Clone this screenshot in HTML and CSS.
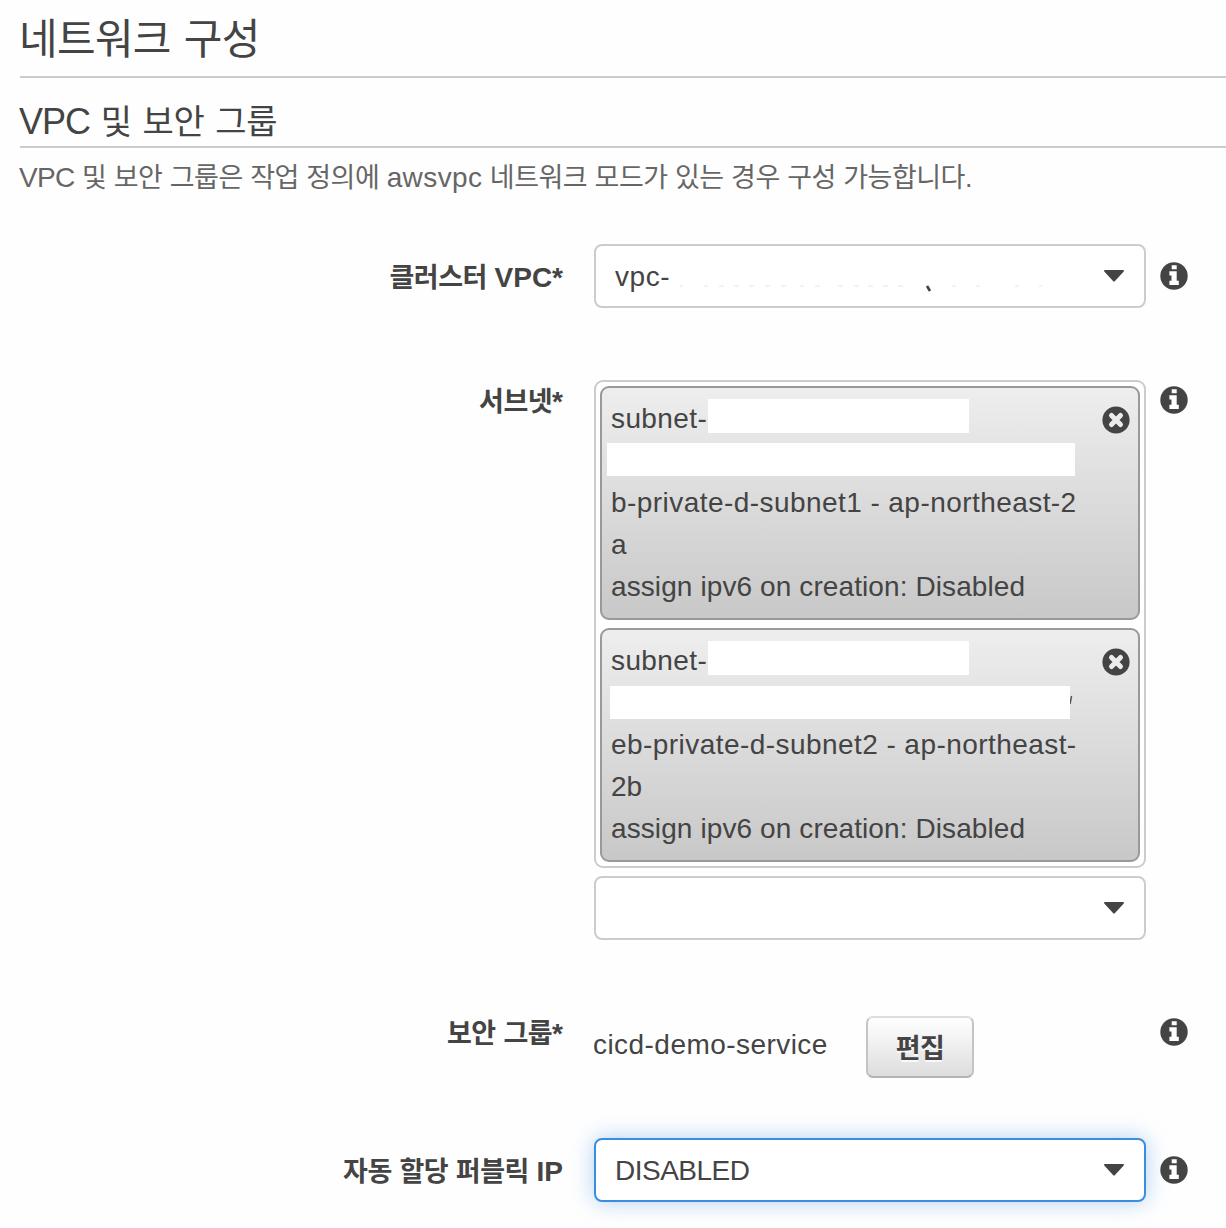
FILE: index.html
```html
<!DOCTYPE html>
<html lang="ko">
<head>
<meta charset="utf-8">
<title>네트워크 구성</title>
<link rel="stylesheet" href="styles.css">
</head>
<body>
<svg class="defs" width="0" height="0">
  <symbol id="info" viewBox="0 0 28 28"><circle cx="14" cy="14" r="13.7" fill="#444"/><path d="M11.7 3.200h5v4h-5zM9.400 9.300h7.300v9.500h2.100v4.300H9.400v-4.300h2.100v-5.400H9.400z" fill="#fff"/></symbol>
  <symbol id="remove" viewBox="0 0 28 28"><circle cx="14" cy="14" r="13.6" fill="#444"/><path d="M9.500 9.500l9 9m0-9l-9 9" stroke="#ececec" stroke-width="5" stroke-linecap="round"/></symbol>
  <symbol id="caret" viewBox="0 0 20 12"><path d="M.5 0h19q.8.8 0 1.800L11 11q-1 1-2 0L.5 1.800q-.8-1 0-1.800z" fill="#444"/></symbol>
</svg>
<main class="page">
  <h1 class="title">네트워크 구성</h1>
  <h2 class="subtitle"><span class="vpc">VPC</span> 및 보안 그룹</h2>
  <p class="desc"><span class="lat desc-vpc">VPC</span> 및 보안 그룹은 작업 정의에 <span class="lat mode">awsvpc</span> 네트워크 모드가 있는 경우 구성 가능합니다.</p>

  <div class="row row-vpc">
    <div class="label">클러스터 <span class="lat">VPC*</span></div>
    <div class="select"><span class="value">vpc-</span>
      <svg class="residue" width="380" height="8" viewBox="0 0 380 8"><path d="M10 1h3M34 1h4M49 1h5M64 1h5M79 1h5M95 1h5M111 1h5M130 1h4M145 1h5M168 1h5M184 1h5M198 1h5M213 1h5M228 1h5M282 1h4M306 1h4M345 1h4M369 1h3" stroke="#e6e6e6"/><path d="M257 1l3 5" stroke="#444" stroke-width="2.600"/></svg>
      <svg class="caret"><use href="#caret"/></svg></div>
    <svg class="info"><use href="#info"/></svg>
  </div>

  <div class="row row-subnet">
    <div class="label">서브넷<span class="lat">*</span></div>
    <div class="field">
      <div class="chips">
        <div class="chip">
          <svg class="remove"><use href="#remove"/></svg>
          <div class="line"><span class="subnet">subnet-</span><span class="mask mask-id"></span></div>
          <div class="line"><span class="mask mask-a"></span></div>
          <div class="line line-name">b-private-d-subnet1 - ap-northeast-2</div>
          <div class="line">a</div>
          <div class="line assign">assign ipv6 on creation: Disabled</div>
        </div>
        <div class="chip">
          <svg class="remove"><use href="#remove"/></svg>
          <div class="line"><span class="subnet">subnet-</span><span class="mask mask-id"></span></div>
          <div class="line"><span class="mask mask-b"></span><svg class="tick" width="3" height="10"><path d="M1.500 1L0 9" stroke="#555" stroke-width="1.500"/></svg></div>
          <div class="line line-name">eb-private-d-subnet2 - ap-northeast-</div>
          <div class="line">2b</div>
          <div class="line assign">assign ipv6 on creation: Disabled</div>
        </div>
      </div>
      <div class="select"><svg class="caret"><use href="#caret"/></svg></div>
    </div>
    <svg class="info"><use href="#info"/></svg>
  </div>

  <div class="row row-group">
    <div class="label">보안 그룹<span class="lat">*</span></div>
    <div class="group"><span class="service">cicd-demo-service</span><button class="edit" type="button">편집</button></div>
    <svg class="info"><use href="#info"/></svg>
  </div>

  <div class="row row-ip">
    <div class="label">자동 할당 퍼블릭 <span class="lat">IP</span></div>
    <div class="select focused"><span class="value disabled">DISABLED</span><svg class="caret"><use href="#caret"/></svg></div>
    <svg class="info"><use href="#info"/></svg>
  </div>
</main>
</body>
</html>
```
FILE: styles.css
```css
* { box-sizing: border-box; }
body {
  margin: 0;
  height: 1228px;
  overflow: hidden;
  background: #fefefe;
  color: #444;
  font: 28px/42px "Liberation Sans", "Noto Sans CJK KR", sans-serif;
}
svg { display: block; flex: none; }
.defs { position: absolute; }
.page { padding-left: 20px; }
.title {
  margin: 0;
  height: 78px;
  padding-top: 10px;
  border-bottom: 2px solid #ccc;
  font-size: 42px;
  line-height: 60px;
  font-weight: 400;
  letter-spacing: -0.7px;
  word-spacing: 2px;
  text-indent: -1px;
}
.subtitle {
  margin: 0;
  height: 70px;
  padding-top: 23px;
  border-bottom: 2px solid #ccc;
  font-size: 34px;
  line-height: 42px;
  font-weight: 400;
  letter-spacing: -0.2px;
  word-spacing: 1.4px;
}
.vpc { font-size: 36px; margin-left: -1px; letter-spacing: -1px; }
.desc {
  margin: 0;
  height: 96px;
  padding-top: 9px;
  font-size: 27px;
  color: #666;
  letter-spacing: -0.5px;
  word-spacing: 0.4px;
  white-space: nowrap;
}
.lat { font-size: 28px; letter-spacing: 0; }
.desc-vpc { letter-spacing: -0.7px; margin-left: -1px; }
.mode { letter-spacing: 0.4px; }
.row {
  display: grid;
  grid-template-columns: 543px 552px 28px;
  column-gap: 0;
  align-items: start;
}
.row > :nth-child(2) { margin-left: 31px; width: 552px; }
.row > .info { margin-left: 45px; }
.label {
  text-align: right;
  font-size: 27px;
  font-weight: 700;
  letter-spacing: -0.5px;
  word-spacing: 0.7px;
  white-space: nowrap;
}
.info { width: 28px; height: 28px; }
.row-vpc { height: 136px; }
.row-vpc .label, .row-ip .label { padding-top: 13px; }
.row-vpc .info, .row-ip .info { margin-top: 18px; }
.row-subnet { height: 636px; }
.row-subnet .label { padding-top: 1px; }
.row-subnet .info { margin-top: 6px; }
.row-group { height: 122px; }
.row-group .info { margin-top: 2px; }
.row-group .label { margin-top: -3px; }
.select {
  display: flex;
  align-items: center;
  height: 64px;
  padding: 0 20px 0 19px;
  border: 2px solid #ccc;
  border-radius: 8px;
  background: #fff;
}
.focused {
  border-color: #3b8ddd;
  box-shadow: 0 0 22px rgba(59, 141, 221, .4);
}
.value { padding-top: 1px; width: 54px; letter-spacing: 0.6px; }
.value.disabled { width: auto; letter-spacing: -0.5px; }
.residue { margin: 26px 0 0 1px; }
.caret { width: 20px; height: 12px; margin-left: auto; }
.chips {
  display: grid;
  row-gap: 8px;
  height: 488px;
  padding: 4px;
  border: 2px solid #ccc;
  border-radius: 9px;
  background: #fff;
}
.chips + .select { margin-top: 8px; }
.chip {
  position: relative;
  height: 234px;
  padding: 10px 9px 8px;
  border: 2px solid #999;
  border-radius: 9px;
  background: linear-gradient(#eee, #c8c8c8);
}
.remove { position: absolute; right: 8px; top: 18px; width: 28px; height: 28px; }
.line { display: flex; align-items: flex-start; height: 42px; white-space: pre; }
.line-name { letter-spacing: 0.44px; }
.assign { letter-spacing: 0.1px; }
.mask { flex: none; background: #fff; }
.subnet { width: 97px; letter-spacing: 0.4px; }
.mask-id { width: 261px; height: 34px; margin-top: 1px; }
.mask-a { width: 468px; height: 33px; margin: 3px 0 0 -4px; }
.mask-b { width: 460px; height: 33px; margin: 4px 0 0 -1px; }
.tick { margin-top: 13px; }
.group { display: flex; align-items: flex-start; }
.service { width: 272px; padding-top: 8px; letter-spacing: 0.45px; text-indent: -1px; }
.edit {
  width: 108px;
  height: 62px;
  padding: 0;
  border: 2px solid;
  border-color: #ddd #c4c4c4 #b4b4b4;
  border-radius: 7px;
  background: linear-gradient(#fff, #ddd);
  color: #444;
  font: 700 27px/54px "Noto Sans CJK KR", sans-serif;
  letter-spacing: -0.5px;
  text-shadow: 0 2px 0 rgba(255, 255, 255, .8);
}
```
